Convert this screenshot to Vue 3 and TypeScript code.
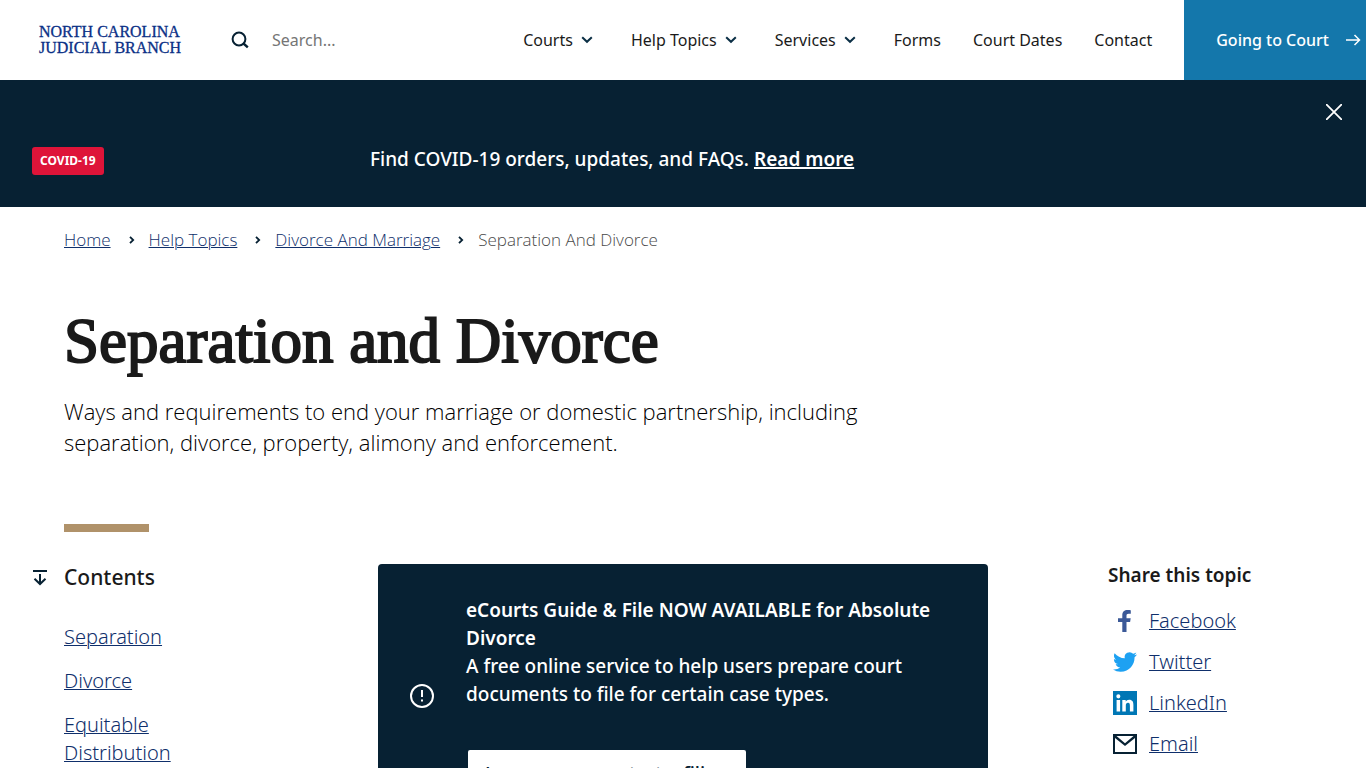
<script setup lang="ts">
interface NavItem { label: string; menu: boolean }
interface Share { name: string; color: string; path: string }

const nav: NavItem[] = [
  { label: 'Courts', menu: true },
  { label: 'Help Topics', menu: true },
  { label: 'Services', menu: true },
  { label: 'Forms', menu: false },
  { label: 'Court Dates', menu: false },
  { label: 'Contact', menu: false },
]
const crumbs: string[] = ['Home', 'Help Topics', 'Divorce And Marriage']
const contents: string[] = ['Separation', 'Divorce', 'Equitable Distribution']
const shares: Share[] = [
  { name: 'Facebook', color: '#3b5998', path: 'M9.3 23V13H5V9.2h4.3V6.3C9.300 2.800 11.400 1 14.600 1c1.500 0 2.800.1 3.200.2v3.600h-2.200c-1.700 0-2.100.9-2.100 2.100v2.300h4.200l-.6 3.800h-3.600v10z' },
  { name: 'Twitter', color: '#1da1f2', path: 'M23.953 4.570a10 10 0 0 1-2.825.775 4.958 4.958 0 0 0 2.163-2.723c-.951.555-2.005.959-3.127 1.184a4.920 4.920 0 0 0-8.384 4.482C7.690 8.095 4.067 6.130 1.640 3.162a4.822 4.822 0 0 0-.666 2.475c0 1.710.870 3.213 2.188 4.096a4.904 4.904 0 0 1-2.228-.616v.060a4.923 4.923 0 0 0 3.946 4.827 4.996 4.996 0 0 1-2.212.085 4.936 4.936 0 0 0 4.604 3.417 9.867 9.867 0 0 1-6.102 2.105c-.390 0-.779-.023-1.170-.067a13.995 13.995 0 0 0 7.557 2.209c9.053 0 13.998-7.496 13.998-13.985 0-.210 0-.420-.015-.630A9.935 9.935 0 0 0 24 4.590z' },
  { name: 'LinkedIn', color: '#0077b5', path: 'M0 0h24v24H0zM3.600 9v11.500h3.500V9zM5.350 3.300a2.050 2.050 0 1 0 0 4.100 2.050 2.050 0 0 0 0-4.100zM9.300 9v11.500h3.500v-5.700c0-1.600.4-3 2.200-3s1.900 1.600 1.900 3.100v5.600h3.500v-6.300c0-3.200-.8-5.500-4.300-5.500-1.700 0-2.800.9-3.300 1.800h-.1V9z' },
  { name: 'Email', color: '#072133', path: 'M0 2h24v20H0zM2 5.900V20h20V5.900L12 14zM3.500 4L12 11.300 20.500 4z' },
]
</script>

<template>
  <div class="page">
    <header class="top">
      <a class="logo" href="#"><span>NORTH CAROLINA</span><span>JUDICIAL BRANCH</span></a>
      <form class="search" role="search" @submit.prevent>
        <button type="submit" aria-label="Submit search">
          <svg width="18" height="18" viewBox="0 0 18 18" fill="none" stroke="#072133" stroke-width="2"><circle cx="8" cy="8" r="6.400" /><path d="M12.500 12.500l4.300 3.800" stroke-width="2.400" /></svg>
        </button>
        <input type="search" placeholder="Search..." aria-label="Search" />
      </form>
      <nav class="nav" aria-label="Main">
        <template v-for="item in nav" :key="item.label">
          <button v-if="item.menu" type="button" class="menu">
            {{ item.label }}
            <svg width="12" height="8" viewBox="0 0 12 8" fill="none" stroke="#0b2f45" stroke-width="2"><path d="M1.200 1.200L6 5.800l4.800-4.600" /></svg>
          </button>
          <a v-else href="#">{{ item.label }}</a>
        </template>
      </nav>
      <a class="going" href="#">
        Going to Court
        <svg width="16" height="14" viewBox="0 0 16 14" fill="none" stroke="#fff" stroke-width="1.500"><path d="M1 7h13M9.500 2l5 5-5 5" /></svg>
      </a>
    </header>

    <section class="alert" aria-label="Alert">
      <span class="badge">COVID-19</span>
      <p>Find COVID-19 orders, updates, and FAQs. <a href="#">Read more</a></p>
      <button type="button" class="close" aria-label="Close alert">
        <svg width="16" height="16" viewBox="0 0 16 16" stroke="#fff" stroke-width="1.800"><path d="M0 0l16 16M16 0L0 16" /></svg>
      </button>
    </section>

    <main>
      <nav class="crumbs" aria-label="Breadcrumb">
        <template v-for="c in crumbs" :key="c">
          <a href="#">{{ c }}</a>
          <svg width="6" height="8" viewBox="0 0 6 8" fill="none" stroke="#072133" stroke-width="1.800"><path d="M1 .8L4.200 4 1 7.200" /></svg>
        </template>
        <span>Separation And Divorce</span>
      </nav>
      <h1>Separation and Divorce</h1>
      <p class="intro">Ways and requirements to end your marriage or domestic partnership, including separation, divorce, property, alimony and enforcement.</p>
      <div class="rule"></div>

      <div class="columns">
        <nav class="contents" aria-label="Contents">
          <h2>
            <svg width="14" height="16" viewBox="0 0 14 16" fill="none" stroke="#072133" stroke-width="2"><path d="M0 1h14M7 4v10M1.500 8.800L7 14l5.500-5.200" /></svg>
            Contents
          </h2>
          <ul>
            <li v-for="c in contents" :key="c"><a href="#">{{ c }}</a></li>
          </ul>
        </nav>
        <section class="notice">
          <svg width="24" height="24" viewBox="0 0 24 24" fill="none" stroke="#fff" stroke-width="2"><circle cx="12" cy="12" r="11" /><path d="M12 6v7M12 15.500v2" /></svg>
          <div>
            <p><strong>eCourts Guide &amp; File NOW AVAILABLE for Absolute Divorce</strong><br />A free online service to help users prepare court documents to file for certain case types.</p>
            <a class="cta" href="#">Learn more or start a filing</a>
          </div>
        </section>
        <aside class="share">
          <h2>Share this topic</h2>
          <ul>
            <li v-for="s in shares" :key="s.name">
              <svg width="24" height="24" viewBox="0 0 24 24"><path :d="s.path" :fill="s.color" fill-rule="evenodd" /></svg>
              <a href="#">{{ s.name }}</a>
            </li>
          </ul>
        </aside>
      </div>
    </main>
  </div>
</template>

<style>
body { margin: 0; }
</style>

<style scoped>
.page { font-family: "Noto Sans", "Open Sans", sans-serif; color: #1a1a1a; background: #fff; min-height: 100vh; }
a { color: #0f2f6b; text-decoration-thickness: 1px; }
svg { flex: none; display: block; }
ul { list-style: none; margin: 0; padding: 0; }
button { font: inherit; color: inherit; background: none; border: 0; padding: 0; cursor: pointer; }
.top { display: flex; align-items: center; height: 80px; font-size: 16px; line-height: 24px; white-space: nowrap; }
.logo { display: flex; flex-direction: column; margin-left: 39px; width: 192px; font: 16px/16px "Liberation Serif", serif; color: #0a2f86; text-decoration: none; -webkit-text-stroke: 0.300px #0a2f86; }
.search { display: flex; align-items: center; flex: 1; gap: 23px; min-width: 0; }
.search input { font: inherit; border: 0; padding: 0; outline: 0; width: 100%; min-width: 0; background: none; }
.search input::placeholder { color: #757575; opacity: 1; }
.nav { display: flex; align-items: center; gap: 32px; padding-right: 32px; }
.nav a { color: #1a1a1a; text-decoration: none; }
.menu { display: flex; align-items: center; gap: 8px; padding-right: 6px; }
.going { display: flex; align-items: center; gap: 16px; align-self: stretch; padding: 0 5px 0 32px; background: #1477ab; color: #fff; text-decoration: none; font-weight: 500; }
.alert { position: relative; display: grid; grid-template-columns: 338px 1fr; align-items: end; padding: 64px 32px 32px; background: #072133; color: #fff; }
.alert p { margin: 0; font-size: 19px; line-height: 31px; font-weight: 500; }
.alert a { color: #fff; font-weight: 600; text-decoration-thickness: 2px; }
.badge { justify-self: start; background: #de1439; border-radius: 3px; padding: 0 8px; font-size: 12px; line-height: 28px; font-weight: 700; }
.close { position: absolute; top: 24px; right: 24px; }
main { padding: 0 64px 32px; }
.crumbs { display: flex; align-items: center; padding-top: 21px; font: 300 17px/24px "Open Sans", sans-serif; }
.crumbs svg { margin: 0 14px 0 18px; }
.crumbs span { color: #4a4a4a; }
h1 { margin: 49px 0 0; font: 400 63px/80px "Liberation Serif", serif; -webkit-text-stroke: 2px #1a1a1a; }
.intro { max-width: 820px; margin: 15px 0 0; font: 300 22px/31px "Open Sans", sans-serif; color: #000; }
.rule { width: 85px; height: 8px; margin: 66px 0 32px; background: #b0926a; }
.columns { display: grid; grid-template-columns: 194px minmax(0, 610px) 194px; justify-content: space-between; align-items: start; }
h2 { margin: 0; font-weight: 600; }
.contents { max-width: 146px; }
.contents h2 { display: flex; align-items: center; gap: 17px; margin-left: -31px; font-size: 21px; line-height: 27px; font-weight: 500; }
.contents ul { margin-top: 32px; }
.contents li { margin-bottom: 16px; font-size: 20px; line-height: 28px; font-weight: 300; }
.notice { display: flex; align-items: center; gap: 32px; padding: 32px; background: #072133; color: #fff; border-radius: 4px; }
.notice p { margin: 0 0 40px; font-size: 19px; line-height: 28px; font-weight: 500; }
.notice strong { font-weight: 600; }
.cta { display: inline-block; background: #fff; border: 2px solid #072133; border-radius: 4px; padding: 10px 17px 6px; font-size: 19px; line-height: 28px; font-weight: 500; color: #072133; text-decoration: none; }
.share h2 { font-size: 19px; line-height: 22px; }
.share ul { margin-top: 20px; }
.share li { display: flex; align-items: center; gap: 12px; padding-left: 5px; margin-bottom: 12px; font-size: 20px; line-height: 29px; font-weight: 300; }
</style>
